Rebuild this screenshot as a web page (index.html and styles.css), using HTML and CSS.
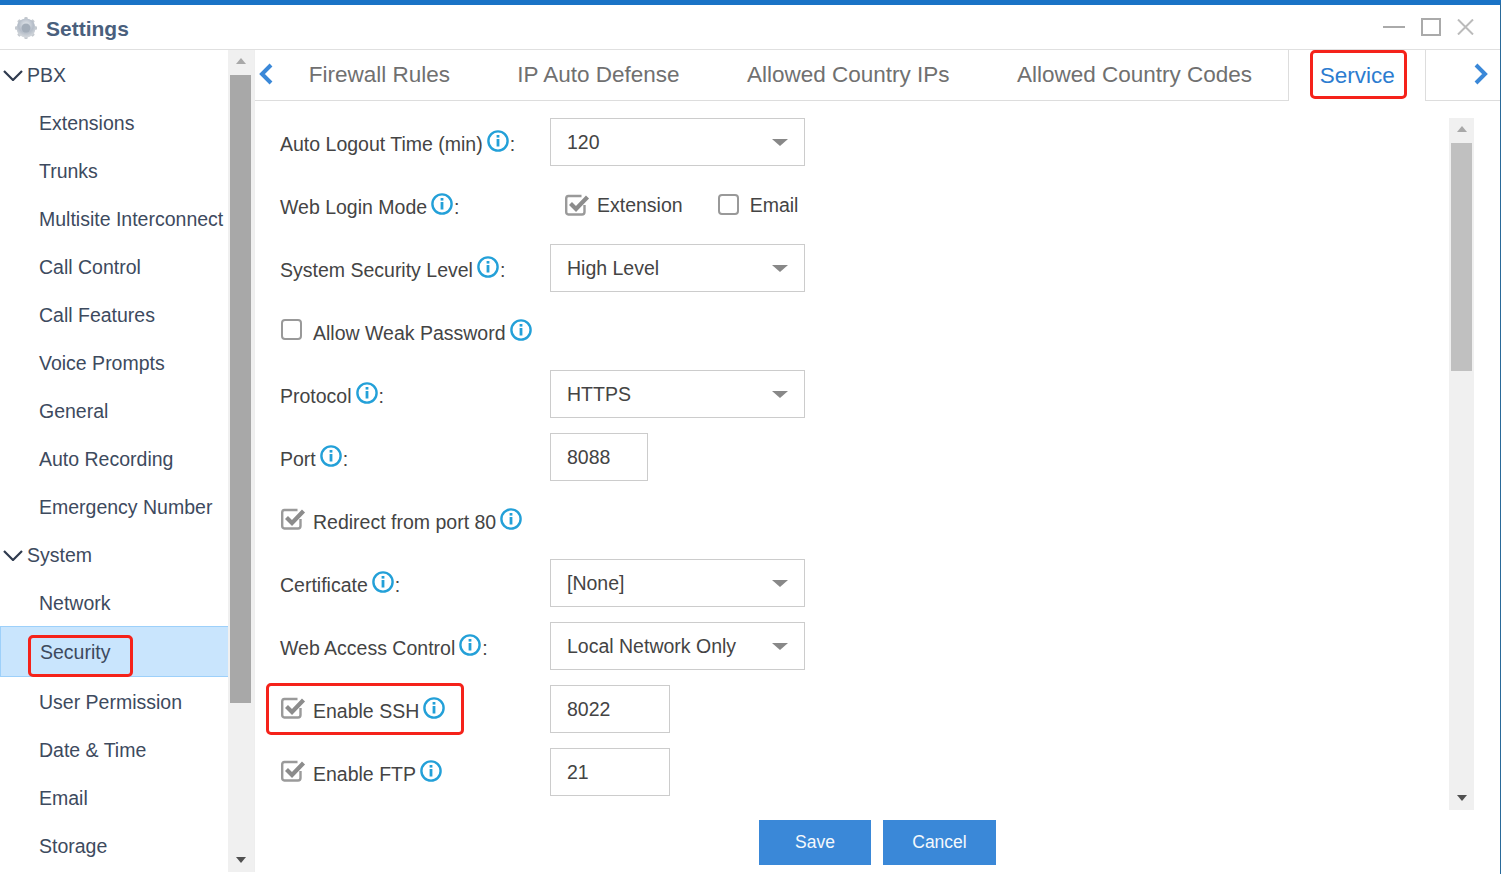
FILE: index.html
```html
<!DOCTYPE html>
<html lang="en">
<head>
<meta charset="utf-8">
<title>Settings</title>
<link rel="stylesheet" href="styles.css">
</head>
<body>
<svg class="defs" width="0" height="0" aria-hidden="true">
  <symbol id="info" viewBox="0 0 22 22">
    <circle cx="11" cy="11" r="9.6" fill="none" stroke="#23a0d8" stroke-width="2.400"/>
    <rect x="9.600" y="9" width="2.800" height="7.500" fill="#23a0d8"/>
    <rect x="9.600" y="5" width="2.800" height="2.600" fill="#23a0d8"/>
  </symbol>
  <symbol id="checked" viewBox="0 0 25 22">
    <path d="M19.500 11V18a2.500 2.500 0 0 1-2.500 2.500H3.500A2.500 2.500 0 0 1 1.200 18V4.500A2.500 2.500 0 0 1 3.500 2H16.500" fill="none" stroke="#9a9a9a" stroke-width="2.400"/>
    <path d="M5.500 9.500l5.500 5.500L22.500 3" fill="none" stroke="#8c8c8c" stroke-width="4.200"/>
  </symbol>
  <symbol id="chev" viewBox="0 0 20 11">
    <path d="M1 1l9 9 9-9" fill="none" stroke="#2f3b4f" stroke-width="2.200"/>
  </symbol>
</svg>

<div class="window">
  <header class="titlebar">
    <svg class="gear" width="24" height="24" viewBox="0 0 24 24">
      <defs>
        <radialGradient id="gearfill" cx="50%" cy="35%" r="65%">
          <stop offset="0" stop-color="#e6eaef"/>
          <stop offset="0.6" stop-color="#b5bdc8"/>
          <stop offset="1" stop-color="#d6dade"/>
        </radialGradient>
      </defs>
      <g fill="#c4c9cf">
        <rect x="10.300" y="1" width="3.400" height="22" rx="1"/>
        <rect x="10.300" y="1" width="3.400" height="22" rx="1" transform="rotate(45 12 12)"/>
        <rect x="10.300" y="1" width="3.400" height="22" rx="1" transform="rotate(90 12 12)"/>
        <rect x="10.300" y="1" width="3.400" height="22" rx="1" transform="rotate(135 12 12)"/>
      </g>
      <circle cx="12" cy="12" r="9.500" fill="url(#gearfill)"/>
      <circle cx="12" cy="12" r="4.500" fill="#a3adb9"/>
    </svg>
    <h1 class="title">Settings</h1>
    <div class="controls">
      <svg width="22" height="2" viewBox="0 0 22 2"><rect width="22" height="2" fill="#aaa"/></svg>
      <svg width="20" height="18" viewBox="0 0 20 18"><rect x="1" y="1" width="18" height="16" fill="none" stroke="#aaa" stroke-width="2"/></svg>
      <svg width="17" height="16" viewBox="0 0 17 16"><path d="M1 .5l15 15M16 .5l-15 15" stroke="#bbb" stroke-width="2" fill="none"/></svg>
    </div>
  </header>

  <div class="body">
    <nav class="sidebar">
      <div class="tree">
        <div class="group"><svg class="chev" width="20" height="11"><use href="#chev"/></svg>PBX</div>
        <div class="item">Extensions</div>
        <div class="item">Trunks</div>
        <div class="item">Multisite Interconnect</div>
        <div class="item">Call Control</div>
        <div class="item">Call Features</div>
        <div class="item">Voice Prompts</div>
        <div class="item">General</div>
        <div class="item">Auto Recording</div>
        <div class="item">Emergency Number</div>
        <div class="group"><svg class="chev" width="20" height="11"><use href="#chev"/></svg>System</div>
        <div class="item">Network</div>
        <div class="item selected">Security<span class="mark mark-security"></span></div>
        <div class="item">User Permission</div>
        <div class="item">Date &amp; Time</div>
        <div class="item">Email</div>
        <div class="item">Storage</div>
      </div>
      <div class="scrollbar side-scroll">
        <span class="arrow-up"></span>
        <span class="thumb side-thumb"></span>
        <span class="arrow-down"></span>
      </div>
    </nav>

    <main class="main">
      <div class="tabs">
        <svg class="tab-arrow prev" width="16" height="22" viewBox="0 0 16 22"><path d="M13 2L4 11l9 9" fill="none" stroke="#3a88d8" stroke-width="4"/></svg>
        <div class="tab">Firewall Rules</div>
        <div class="tab">IP Auto Defense</div>
        <div class="tab">Allowed Country IPs</div>
        <div class="tab">Allowed Country Codes</div>
        <div class="tab active">Service<span class="mark mark-service"></span></div>
        <svg class="tab-arrow next" width="16" height="22" viewBox="0 0 16 22"><path d="M3 2l9 9-9 9" fill="none" stroke="#3a88d8" stroke-width="4"/></svg>
      </div>

      <div class="content">
        <form class="form">
          <div class="row">
            <div class="label"><span class="txt">Auto Logout Time (min)</span><svg class="info"><use href="#info"/></svg><span class="txt">:</span></div>
            <div class="select">120<span class="caret"></span></div>
          </div>
          <div class="row">
            <div class="label"><span class="txt">Web Login Mode</span><svg class="info"><use href="#info"/></svg><span class="txt">:</span></div>
            <div class="choice first"><svg class="box-on"><use href="#checked"/></svg>Extension</div>
            <div class="choice second"><span class="box-off"></span>Email</div>
          </div>
          <div class="row">
            <div class="label"><span class="txt">System Security Level</span><svg class="info"><use href="#info"/></svg><span class="txt">:</span></div>
            <div class="select">High Level<span class="caret"></span></div>
          </div>
          <div class="row">
            <div class="check"><span class="box-off"></span><span class="txt">Allow Weak Password</span><svg class="info"><use href="#info"/></svg></div>
          </div>
          <div class="row">
            <div class="label"><span class="txt">Protocol</span><svg class="info"><use href="#info"/></svg><span class="txt">:</span></div>
            <div class="select">HTTPS<span class="caret"></span></div>
          </div>
          <div class="row">
            <div class="label"><span class="txt">Port</span><svg class="info"><use href="#info"/></svg><span class="txt">:</span></div>
            <div class="field port">8088</div>
          </div>
          <div class="row">
            <div class="check"><svg class="box-on"><use href="#checked"/></svg><span class="txt">Redirect from port 80</span><svg class="info"><use href="#info"/></svg></div>
          </div>
          <div class="row">
            <div class="label"><span class="txt">Certificate</span><svg class="info"><use href="#info"/></svg><span class="txt">:</span></div>
            <div class="select">[None]<span class="caret"></span></div>
          </div>
          <div class="row">
            <div class="label"><span class="txt">Web Access Control</span><svg class="info"><use href="#info"/></svg><span class="txt">:</span></div>
            <div class="select">Local Network Only<span class="caret"></span></div>
          </div>
          <div class="row">
            <div class="label check"><svg class="box-on"><use href="#checked"/></svg><span class="txt">Enable SSH</span><svg class="info"><use href="#info"/></svg></div>
            <div class="field short">8022</div>
            <span class="mark mark-ssh"></span>
          </div>
          <div class="row">
            <div class="label check"><svg class="box-on"><use href="#checked"/></svg><span class="txt">Enable FTP</span><svg class="info"><use href="#info"/></svg></div>
            <div class="field short">21</div>
          </div>
        </form>
        <div class="scrollbar form-scroll">
          <span class="arrow-up"></span>
          <span class="thumb form-thumb"></span>
          <span class="arrow-down"></span>
        </div>
      </div>

      <div class="footer">
        <button class="btn save" type="button">Save</button>
        <button class="btn cancel" type="button">Cancel</button>
      </div>
    </main>
  </div>
</div>
</body>
</html>
```

FILE: styles.css
```css
* { box-sizing: border-box; }
html, body { margin: 0; height: 100%; }
body {
  font-family: "Liberation Sans", Arial, sans-serif;
  font-size: 19.5px;
  color: #444;
  background: #fff;
  overflow: hidden;
}
.defs { position: absolute; }

.window {
  height: 100%;
  display: flex;
  flex-direction: column;
  border-top: 5px solid #1a73c6;
  border-right: 1px solid #2a6a9a;
}

.titlebar {
  height: 45px;
  flex: none;
  display: flex;
  align-items: center;
  padding-left: 14px;
  border-bottom: 1px solid #e0e0e0;
}
.gear { flex: none; margin-top: 2px; }
.title {
  margin: 3px 0 0 8px;
  font-size: 21px;
  font-weight: 700;
  color: #4a5f7d;
}
.controls {
  margin-left: auto;
  display: flex;
  align-items: center;
  gap: 16px;
  padding-right: 26px;
}

.body { flex: 1; min-height: 0; display: flex; padding-bottom: 2px; }

.sidebar { width: 255px; flex: none; display: flex; border-right: 1px solid #eee; }
.tree { width: 228px; flex: none; overflow: hidden; color: #3d4a5e; }
.group {
  height: 48px;
  display: flex;
  align-items: center;
  padding-left: 3px;
  gap: 4px;
  white-space: nowrap;
}
.group:first-child { height: 49px; padding-top: 1px; }
.chev { flex: none; }
.item {
  position: relative;
  height: 48px;
  display: flex;
  align-items: center;
  padding-left: 39px;
  white-space: nowrap;
}
.item.selected {
  height: 51px;
  margin-top: -1px;
  margin-bottom: 1px;
  padding-top: 1px;
  background: #c9e5fd;
  border: 1px solid #9dd0fa;
  border-right: 0;
}

.scrollbar {
  position: relative;
  background: #f0f0f0;
  display: flex;
  flex-direction: column;
  align-items: center;
}
.side-scroll { width: 26px; flex: none; }
.thumb { display: block; width: 21px; flex: none; }
.side-thumb { height: 628px; background: #a8a8a8; margin-top: 11px; margin-left: -1px; }
.form-thumb { height: 228px; background: #c0c0c0; margin-top: 11px; }
.arrow-up, .arrow-down {
  display: block;
  flex: none;
  width: 0;
  height: 0;
  border-left: 5.500px solid transparent;
  border-right: 5.500px solid transparent;
}
.arrow-up { border-bottom: 6px solid #a8a8a8; margin-top: 8px; }
.arrow-down { border-top: 6px solid #505050; margin-top: auto; margin-bottom: 9px; }

.main { flex: 1; min-width: 0; display: flex; flex-direction: column; }

.tabs {
  height: 51px;
  flex: none;
  display: flex;
  align-items: stretch;
  border-bottom: 1px solid #ddd;
  font-size: 22.500px;
  color: #707070;
}
.tab-arrow { flex: none; align-self: center; margin-bottom: 3px; }
.tab-arrow.prev { margin-left: 3px; margin-right: 1px; }
.tab-arrow.next { margin-left: 47px; }
.tab { display: flex; align-items: center; padding: 0 33.700px; white-space: nowrap; position: relative; }
.tab.active {
  margin-left: 2px;
  padding: 0 0 0 31px;
  width: 138px;
  flex: none;
  height: 51px;
  color: #2c7cd0;
  background: #fff;
  border-left: 1px solid #ddd;
  border-right: 1px solid #ddd;
}

.content {
  flex: 1;
  min-height: 0;
  display: flex;
  padding: 17px 26px 0 25px;
}
.form { flex: 1; min-width: 0; display: flex; flex-direction: column; gap: 15px; }
.form-scroll { width: 25px; flex: none; }

.row { height: 48px; flex: none; display: flex; align-items: center; position: relative; }
.label, .check { display: flex; align-items: center; white-space: nowrap; }
.label { width: 270px; flex: none; }
.txt { padding-top: 4px; }
.info { width: 22px; height: 22px; flex: none; margin: 0 1px 2px 4px; }

.box-on { width: 25px; height: 22px; flex: none; margin-right: 7px; margin-bottom: 3px; }
.box-off {
  width: 21px;
  height: 21px;
  flex: none;
  border: 2px solid #999;
  border-radius: 4px;
  margin-right: 11px;
  margin-bottom: 3px;
}
.check { padding-left: 1px; }
.choice { display: flex; align-items: center; white-space: nowrap; }
.choice .box-on { margin-right: 7px; margin-bottom: 1px; }
.choice .box-off { margin-right: 11px; margin-bottom: 1px; }
.choice.first { margin-left: 15px; }
.choice.second { margin-left: 35px; }

.select, .field {
  height: 48px;
  display: flex;
  align-items: center;
  border: 1px solid #ccc;
  padding-left: 16px;
  color: #444;
  flex: none;
}
.select { width: 255px; position: relative; }
.caret {
  position: absolute;
  right: 16px;
  top: 20px;
  width: 0;
  height: 0;
  border-left: 8px solid transparent;
  border-right: 8px solid transparent;
  border-top: 7px solid #888;
}
.field.port { width: 98px; }
.field.short { width: 120px; }

.footer {
  height: 62px;
  flex: none;
  display: flex;
  justify-content: center;
  gap: 12px;
  padding-top: 10px;
}
.btn {
  width: 112px;
  height: 45px;
  border: 0;
  padding: 0;
  background: #3a88d8;
  color: #f4f8fc;
  font: 17.500px "Liberation Sans", Arial, sans-serif;
}
.btn.cancel { width: 113px; }

.mark {
  position: absolute;
  border: 3.500px solid #f5221a;
  border-radius: 5px;
  pointer-events: none;
}
.mark-service { left: 21px; top: 0; width: 97px; height: 49px; }
.mark-security { left: 27px; top: 8px; width: 105px; height: 42px; }
.mark-ssh { left: -14px; top: -2px; width: 198px; height: 52px; }
```
